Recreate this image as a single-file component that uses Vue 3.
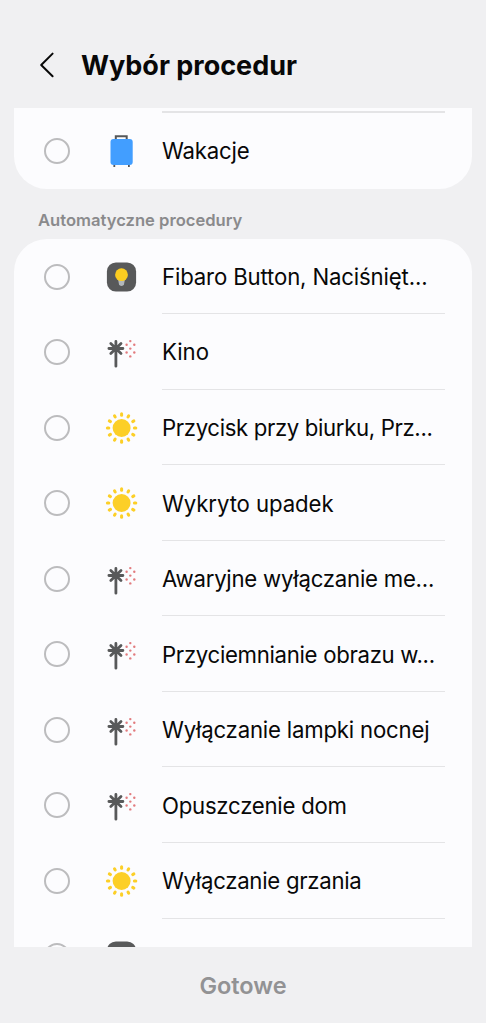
<script setup>
const routines = [
  { name: 'Fibaro Button, Naciśnięt...', icon: 'bulb', spacing: -0.15 },
  { name: 'Kino', icon: 'palm', spacing: 0 },
  { name: 'Przycisk przy biurku, Prz...', icon: 'sun', spacing: -0.36 },
  { name: 'Wykryto upadek', icon: 'sun', spacing: -0.09 },
  { name: 'Awaryjne wyłączanie me...', icon: 'palm', spacing: -0.24 },
  { name: 'Przyciemnianie obrazu w...', icon: 'palm', spacing: -0.31 },
  { name: 'Wyłączanie lampki nocnej', icon: 'palm', spacing: -0.2 },
  { name: 'Opuszczenie dom', icon: 'palm', spacing: -0.25 },
  { name: 'Wyłączanie grzania', icon: 'sun', spacing: -0.28 },
  { name: '', icon: 'bulb', spacing: 0 },
]
const rays = Array.from({ length: 12 }, (_, i) => i * 30)
const dots = [[27.3, 7.1], [23.6, 10.8], [31.3, 10.8], [27.3, 14.6], [23.6, 18.5], [31.3, 18.5], [27.3, 22.4]]
</script>

<template>
  <div class="screen">
    <header class="header">
      <svg class="back" width="16" height="28" viewBox="0 0 16 28">
        <path d="M13.6 2.6 2.2 14 13.6 25.2" fill="none" stroke="#080808" stroke-width="2" stroke-linecap="round" stroke-linejoin="round" />
      </svg>
      <h1>Wybór procedur</h1>
    </header>

    <main class="list">
      <section class="card card-end">
        <div class="top-line"></div>
        <div class="row last">
          <span class="radio"></span>
          <svg class="icon" width="36" height="36" viewBox="0 0 36 36">
            <path d="M12.8 7V3.3h10.9V7" fill="none" stroke="#555759" stroke-width="2" />
            <path d="M11.3 31v3M25.9 31v3" stroke="#555759" stroke-width="1.8" />
            <rect x="7.5" y="6" width="22.2" height="26" rx="3" fill="#429eff" />
          </svg>
          <span class="label"><span class="tight">Wakacje</span></span>
        </div>
      </section>

      <h2>Automatyczne procedury</h2>

      <section class="card card-start">
        <div v-for="(r, i) in routines" :key="i" class="row">
          <span class="radio"></span>
          <svg class="icon" width="36" height="36" viewBox="0 0 36 36">
            <g v-if="r.icon === 'bulb'">
              <rect x="3.9" y="3.4" width="29.2" height="29.2" rx="9" fill="#58595a" />
              <path d="M15 20h7l-1 5.3q-.5 1.7-2.5 1.7t-2.5-1.7z" fill="#b2b7bb" />
              <circle cx="18.5" cy="15.7" r="6.4" fill="#fccd20" />
            </g>
            <g v-else-if="r.icon === 'palm'">
              <path d="M12.9 14.5V32.2M5.9 14.5h14M12.9 7.5v14M7.8 9.4l10.2 10.2M18 9.4 7.8 19.6" fill="none" stroke="#58595a" stroke-width="2.8" stroke-linecap="round" />
              <circle v-for="(d, k) in dots" :key="k" :cx="d[0]" :cy="d[1]" r="1.2" fill="#e27b7e" />
            </g>
            <g v-else fill="#fccf27">
              <circle cx="18.6" cy="18" r="9" />
              <rect v-for="a in rays" :key="a" x="17.1" y="2.3" width="3" height="4.4" rx="1.5" :transform="`rotate(${a} 18.6 18)`" />
            </g>
          </svg>
          <span class="label"><span :style="{ letterSpacing: r.spacing + 'px' }">{{ r.name }}</span></span>
        </div>
      </section>
    </main>

    <footer class="footer"><button>Gotowe</button></footer>
  </div>
</template>

<style>
body { background: #f0f0f2; }
</style>

<style scoped>
.screen {
  display: flex;
  flex-direction: column;
  width: 486px;
  height: 1023px;
  overflow: hidden;
  background: #f0f0f2;
  color: #080808;
  font-family: Inter, "Noto Sans", sans-serif;
}
.header {
  display: flex;
  flex: none;
  align-items: center;
  height: 108px;
  padding: 22px 0 0 39px;
  box-sizing: border-box;
}
.back { margin-right: 26px; }
h1 { margin: 0; padding-top: 1px; font-size: 27px; line-height: 36px; font-weight: 700; white-space: nowrap; }
.list { flex: none; height: 839px; padding: 0 14px; overflow: hidden; }
.card { background: #fcfcfe; }
.card-end { height: 80.6px; border-radius: 0 0 33px 33px; }
.card-start { border-radius: 33px 33px 0 0; }
.top-line { height: 1.5px; margin: 0 27px 0 148px; background: #e4e4e6; transform: translateY(3px); }
.row { display: flex; align-items: stretch; height: 75.56px; padding-top: 0.3px; box-sizing: border-box; }
.row.last { height: 79.5px; padding-top: 3.4px; }
.radio {
  align-self: center;
  flex: none;
  width: 26px;
  height: 26px;
  margin-left: 29.7px;
  box-sizing: border-box;
  border: 2px solid #bcbcbe;
  border-radius: 50%;
}
.icon { align-self: center; flex: none; margin: 0 23.3px 0 33px; }
.label {
  display: flex;
  flex: 1;
  min-width: 0;
  align-items: center;
  margin-right: 27px;
  padding-top: 1.8px;
  box-sizing: border-box;
  border-bottom: 1.5px solid #e4e4e6;
  font-size: 22.2px;
  line-height: 30px;
  white-space: nowrap;
}
.tight { letter-spacing: -0.2px; }
.last .label { border-color: transparent; }
h2 { margin: 0 0 0 24px; height: 50px; font-size: 16.6px; line-height: 62px; font-weight: 600; color: #8a8a8c; white-space: nowrap; }
.footer { display: flex; flex: 1; justify-content: center; align-items: center; }
button { padding: 2px 0 0; border: 0; background: none; font: 600 23.5px/30px Inter, sans-serif; color: #929294; }
</style>
